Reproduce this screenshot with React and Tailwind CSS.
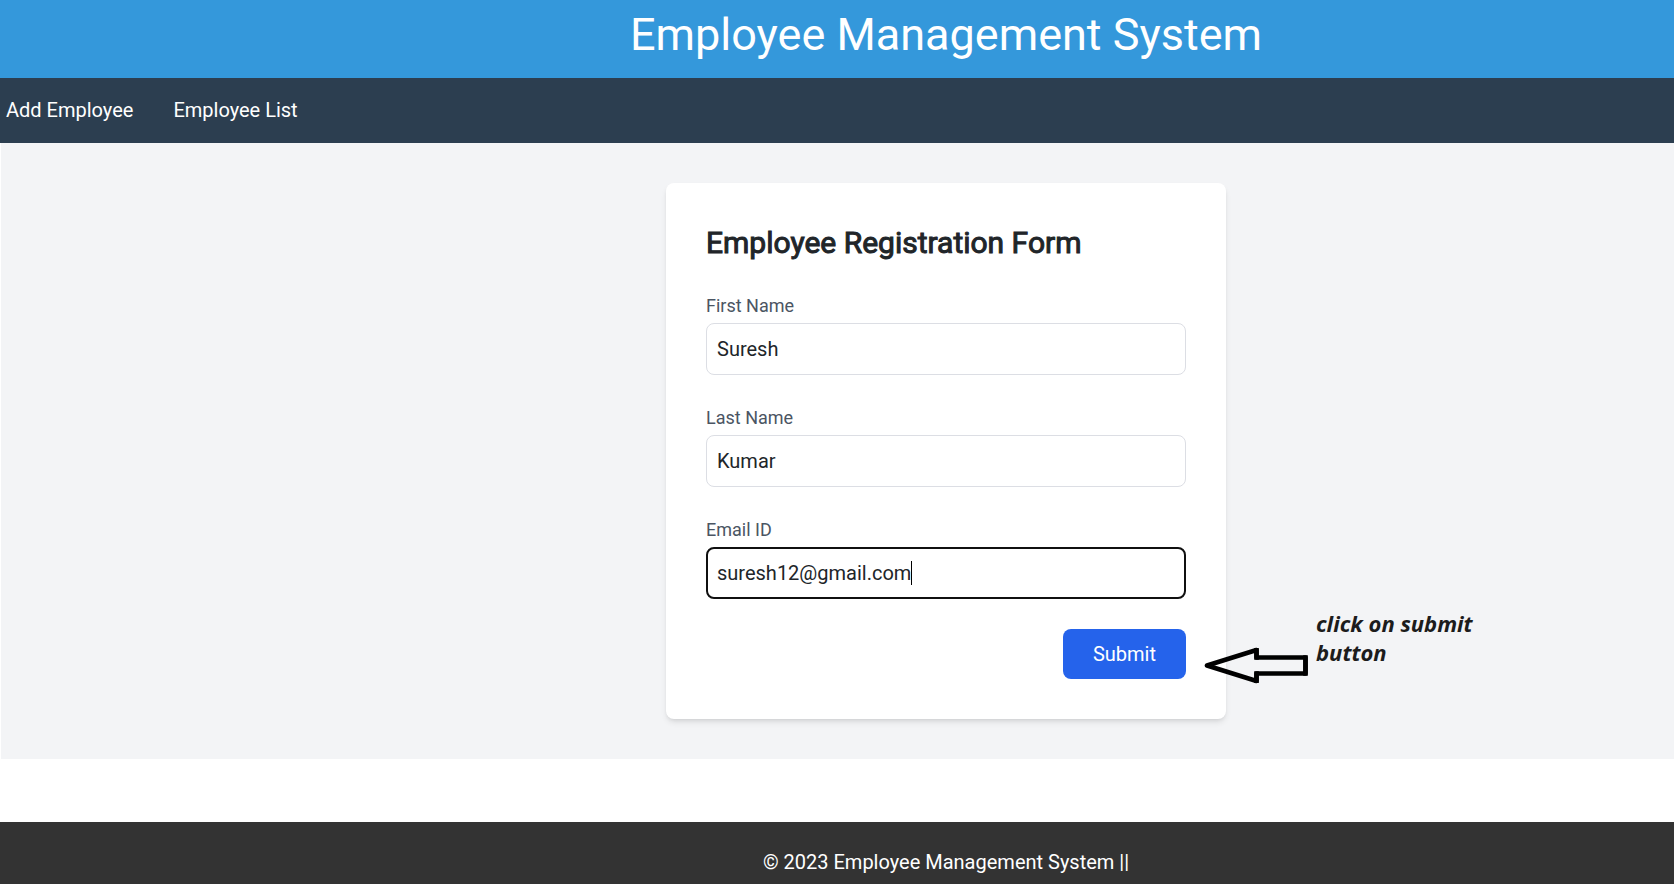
const fields = [
  { id: 'firstName', label: 'First Name', type: 'text', value: 'Suresh' },
  { id: 'lastName', label: 'Last Name', type: 'text', value: 'Kumar' },
  { id: 'emailId', label: 'Email ID', type: 'email', value: 'suresh12@gmail.com', active: true },
];

function Field({ id, label, type, value, active }) {
  return (
    <div>
      <label htmlFor={id} className="block text-[18px] leading-[25px] text-[#4b5563]">
        {label}
      </label>
      <div className="relative mt-[5px]">
        <input
          id={id}
          name={id}
          type={type}
          defaultValue={value}
          className={
            active
              ? 'block h-[52px] w-full rounded-lg border-2 border-[#101010] bg-white px-[9px] text-[20px] text-[#212529] caret-transparent outline-none'
              : 'block h-[52px] w-full rounded-lg border border-[#dcdee4] bg-white px-[10px] text-[20px] text-[#212529] outline-none'
          }
        />
        {active && (
          <span aria-hidden="true" className="pointer-events-none absolute top-[14px] left-[205px] h-6 w-px bg-black" />
        )}
      </div>
    </div>
  );
}

function Callout() {
  return (
    <div className="pointer-events-none absolute -top-5 left-full flex w-[320px] items-start pl-[18px]">
      <svg width="106" height="42" viewBox="0 0 106 42" className="mt-[35px] shrink-0" fill="none" stroke="#000" strokeWidth="4.6" strokeLinejoin="bevel">
        <path d="M3 21.5 L52.5 6 V13.5 H101.5 V29.5 H52.5 V37 Z" strokeLinejoin="round" />
        <path d="M101.5 11.2 V31.8 M52.5 4 V15.8 M52.5 27.2 V39" />
      </svg>
      <p className="ml-[6px] font-['Open_Sans',sans-serif] text-[22px] leading-[29px] font-bold text-[#1c1c1c] italic">
        click on submit
        <br />
        button
      </p>
    </div>
  );
}

export default function App() {
  return (
    <div className="overflow-x-hidden bg-white font-['Roboto',sans-serif] text-[20px] leading-[30px] text-[#212529]">
      <header className="bg-[#3498db] pt-2 pb-4 pl-[218px] text-center text-white">
        <h1 className="text-[45px] leading-[54px] font-normal">Employee Management System</h1>
      </header>

      <nav className="flex gap-10 bg-[#2c3e50] px-[6px] pt-[17px] pb-[18px] text-white">
        <a href="#add">Add Employee</a>
        <a href="#list">Employee List</a>
      </nav>

      <main className="ml-px flex justify-center bg-[#f3f4f6] py-10 pl-[217px]">
        <form className="w-[560px] rounded-lg bg-white p-10 shadow-md">
          <h2 className="text-[30px] leading-[40px] font-normal [-webkit-text-stroke:1px_#212529]">
            Employee Registration Form
          </h2>
          <div className="mt-[30px] flex flex-col gap-[30px]">
            {fields.map((field) => (
              <Field key={field.id} {...field} />
            ))}
            <div className="relative flex justify-end">
              <button type="button" className="h-[50px] rounded-lg bg-[#2563eb] px-[30px] text-[20px] text-white">
                Submit
              </button>
              <Callout />
            </div>
          </div>
        </form>
      </main>

      <footer className="mt-[63px] bg-[#333333] pt-[25px] pb-[7px] pl-[218px] text-center text-white">
        <p>© 2023 Employee Management System ||</p>
      </footer>
    </div>
  );
}
